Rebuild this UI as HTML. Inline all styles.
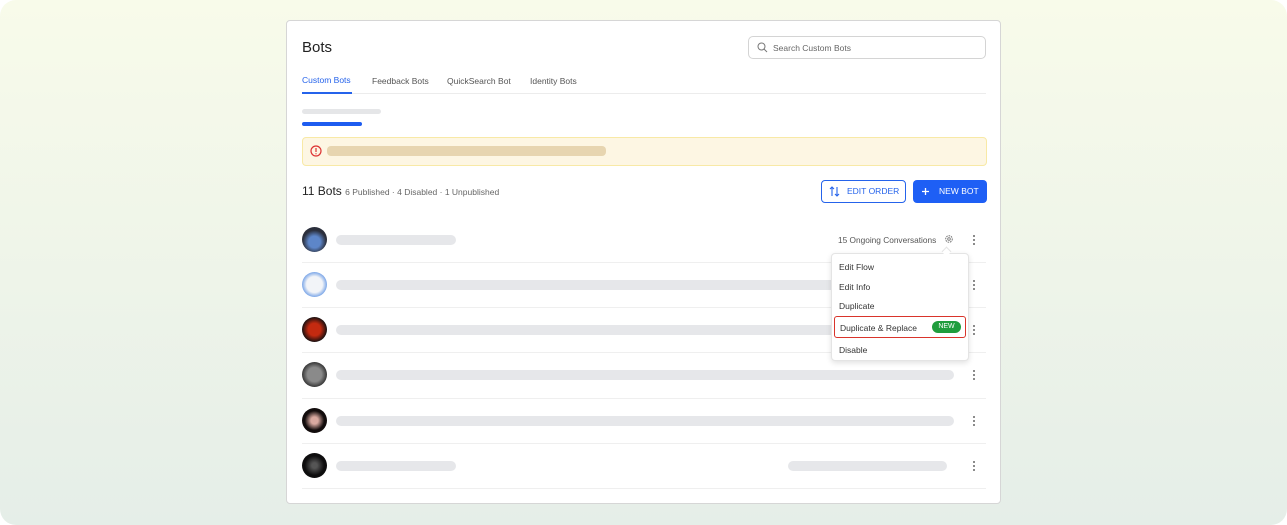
<!DOCTYPE html>
<html><head><meta charset="utf-8"><style>
*{box-sizing:border-box;margin:0;padding:0}
html,body{width:1287px;height:525px;background:#fff;overflow:hidden;font-family:"Liberation Sans",sans-serif}
.bg{position:absolute;left:0;top:0;width:1287px;height:525px;border-radius:16px;background:linear-gradient(#f8fbea,#e5eee8)}
.card{position:absolute;left:286px;top:20px;width:715px;height:484px;background:#fff;border:1px solid #d6d6d6;border-radius:4px}
.abs{position:absolute}
.sk{position:absolute;height:10px;border-radius:5px;background:#e6e7ea}
.av{position:absolute;left:15px;width:25px;height:25px;border-radius:50%}
.dots{position:absolute;left:686px;width:3px;font-size:0}
.dots i{display:block;width:2px;height:2px;background:#666;border-radius:1px;margin-bottom:2px}
.div{position:absolute;left:15px;width:684px;height:1px;background:#efefef}
.mi{position:absolute;left:7px;font-size:8.5px;color:#333}
</style></head><body>
<div class="bg"></div>
<div class="card">
 <div class="abs" style="left:15px;top:18px;font-size:15px;color:#222">Bots</div>
 <div class="abs" style="left:461px;top:15px;width:238px;height:23px;border:1px solid #d4d4d4;border-radius:5px">
  <svg class="abs" style="left:8px;top:5px" width="11" height="11" viewBox="0 0 11 11"><circle cx="4.5" cy="4.5" r="3.5" fill="none" stroke="#777" stroke-width="1"/><path d="M7 7l3 3" stroke="#777" stroke-width="1"/></svg>
  <span class="abs" style="left:24px;top:6px;font-size:8.5px;color:#666">Search Custom Bots</span>
 </div>
 <div class="abs" style="left:15px;top:54px;font-size:8.5px;color:#2563eb">Custom Bots</div>
 <div class="abs" style="left:85px;top:55px;font-size:8.5px;color:#555">Feedback Bots</div>
 <div class="abs" style="left:160px;top:55px;font-size:8.5px;color:#555">QuickSearch Bot</div>
 <div class="abs" style="left:243px;top:55px;font-size:8.5px;color:#555">Identity Bots</div>
 <div class="abs" style="left:15px;top:72px;width:684px;height:1px;background:#ececec"></div>
 <div class="abs" style="left:15px;top:71px;width:50px;height:2px;background:#2563eb"></div>
 <div class="abs" style="left:15px;top:88px;width:79px;height:5px;border-radius:3px;background:#e5e6e8"></div>
 <div class="abs" style="left:15px;top:101px;width:60px;height:4px;border-radius:2px;background:#1d5cf0"></div>
 <div class="abs" style="left:15px;top:116px;width:685px;height:29px;border:1px solid #f8e9a6;border-radius:4px;background:#fdf6e3"></div>
 <svg class="abs" style="left:23px;top:124px" width="12" height="12" viewBox="0 0 12 12"><circle cx="6" cy="6" r="5" fill="none" stroke="#d33" stroke-width="1.2"/><path d="M6 3v4M6 8.3v.9" stroke="#d33" stroke-width="1.2"/></svg>
 <div class="abs" style="left:40px;top:125px;width:279px;height:10px;border-radius:4px;background:#e7d5b0"></div>
 <div class="abs" style="left:15px;top:163px;font-size:12px;color:#222">11 Bots <span style="font-size:8.5px;color:#666">6 Published · 4 Disabled · 1 Unpublished</span></div>
 <div class="abs" style="left:534px;top:159px;width:85px;height:23px;border:1px solid #2563eb;border-radius:4px;color:#2563eb;font-size:8.5px;line-height:21px;padding-left:25px">EDIT ORDER</div>
 <svg class="abs" style="left:542px;top:165px" width="11" height="11" viewBox="0 0 11 11"><path d="M3 10V1M1 3l2-2 2 2M8 1v9M6 8l2 2 2-2" fill="none" stroke="#2563eb" stroke-width="1.1"/></svg>
 <div class="abs" style="left:626px;top:159px;width:74px;height:23px;background:#1e5ff5;border-radius:4px;color:#fff;font-size:8.5px;line-height:23px;padding-left:26px">NEW BOT</div>
 <svg class="abs" style="left:634px;top:166px" width="9" height="9" viewBox="0 0 9 9"><path d="M4.5 1v7M1 4.5h7" stroke="#fff" stroke-width="1.3"/></svg>

 <div class="av" style="top:206px;background:radial-gradient(circle at 50% 60%,#5d86c9 0 30%,#2b2f3c 60%)"></div>
 <div class="sk" style="left:49px;top:214px;width:120px"></div>
 <div class="abs" style="left:551px;top:214px;font-size:8.3px;color:#555">15 Ongoing Conversations</div>
 <svg class="abs" style="left:657px;top:213px" width="10" height="10" viewBox="0 0 10 10"><circle cx="5" cy="5" r="3.3" fill="none" stroke="#777" stroke-width="1" stroke-dasharray="1.6 0.9"/><circle cx="5" cy="5" r="1.3" fill="none" stroke="#777" stroke-width=".9"/></svg>
 <div class="dots" style="top:214px"><i></i><i></i><i></i></div>
 <div class="div" style="top:241px"></div>

 <div class="av" style="top:251px;background:radial-gradient(circle,#f2f4f8 0 45%,#7ea8e8 70%)"></div>
 <div class="sk" style="left:49px;top:259px;width:500px"></div>
 <div class="dots" style="top:259px"><i></i><i></i><i></i></div>
 <div class="div" style="top:286px"></div>

 <div class="av" style="top:296px;background:radial-gradient(circle,#c42a10 0 35%,#1a1010 70%)"></div>
 <div class="sk" style="left:49px;top:304px;width:500px"></div>
 <div class="dots" style="top:304px"><i></i><i></i><i></i></div>
 <div class="div" style="top:331px"></div>

 <div class="av" style="top:341px;background:radial-gradient(circle,#8a8a8a 0 40%,#2a2a2a 75%)"></div>
 <div class="sk" style="left:49px;top:349px;width:618px"></div>
 <div class="dots" style="top:349px"><i></i><i></i><i></i></div>
 <div class="div" style="top:377px"></div>

 <div class="av" style="top:387px;background:radial-gradient(circle,#d9a9a0 0 20%,#120c0c 55%)"></div>
 <div class="sk" style="left:49px;top:395px;width:618px"></div>
 <div class="dots" style="top:395px"><i></i><i></i><i></i></div>
 <div class="div" style="top:422px"></div>

 <div class="av" style="top:432px;background:radial-gradient(circle,#555 0 15%,#0e0d0e 55%)"></div>
 <div class="sk" style="left:49px;top:440px;width:120px"></div>
 <div class="sk" style="left:501px;top:440px;width:159px"></div>
 <div class="dots" style="top:440px"><i></i><i></i><i></i></div>
 <div class="div" style="top:467px"></div>

 <div class="abs" style="left:656px;top:227px;width:7px;height:7px;background:#fff;border-left:1px solid #e4e4e4;border-top:1px solid #e4e4e4;transform:rotate(45deg);z-index:2"></div>
 <div class="abs" style="left:544px;top:232px;width:138px;height:108px;background:#fff;border:1px solid #e4e4e4;border-radius:4px;box-shadow:0 2px 6px rgba(0,0,0,.12)">
  <div class="mi" style="top:8px">Edit Flow</div>
  <div class="mi" style="top:28px">Edit Info</div>
  <div class="mi" style="top:47px">Duplicate</div>
  <div class="abs" style="left:2px;top:62px;width:132px;height:22px;border:1px solid #d9342b;border-radius:3px"></div>
  <div class="mi" style="left:8px;top:69px">Duplicate &amp; Replace</div>
  <div class="abs" style="left:100px;top:67px;width:29px;height:12px;border-radius:6px;background:#1f9d3d;color:#fff;font-size:7px;line-height:12px;text-align:center">NEW</div>
  <div class="mi" style="top:91px">Disable</div>
 </div>
</div>
</body></html>
